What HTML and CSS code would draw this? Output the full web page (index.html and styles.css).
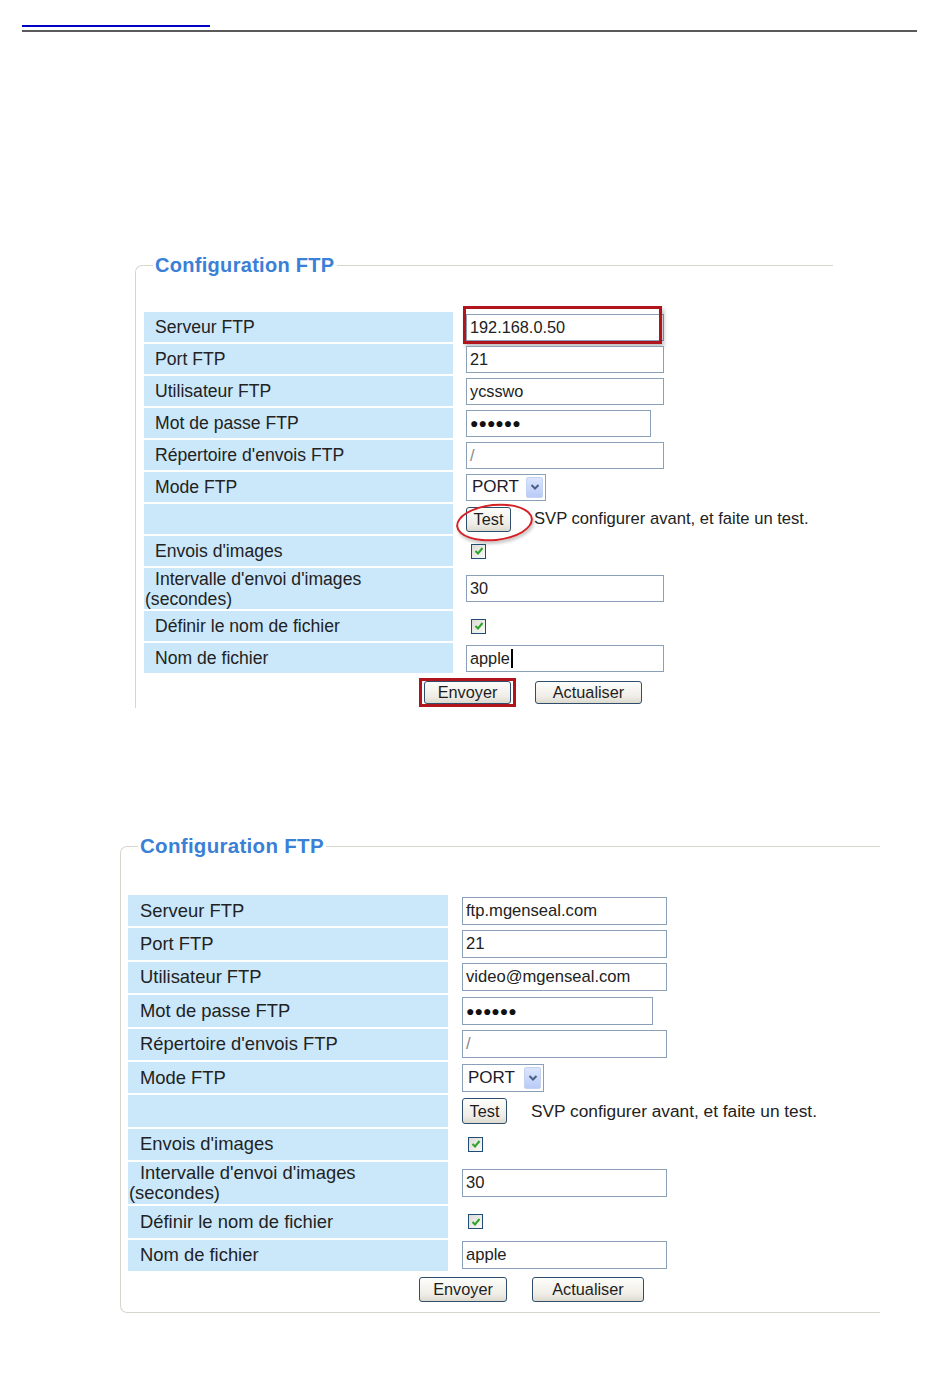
FILE: index.html
```html
<!DOCTYPE html>
<html lang="fr">
<head>
<meta charset="utf-8">
<title>Configuration FTP</title>
<link rel="stylesheet" href="styles.css">
</head>
<body>
<header class="page-head">
  <div class="head-link"></div>
  <div class="head-rule"></div>
</header>

<main class="page">
  <section class="shot shot-1">
    <fieldset class="panel">
      <legend class="panel-title">Configuration FTP</legend>
      <div class="form-grid">
        <div class="lbl">Serveur FTP</div>
        <div class="val">
          <span class="field">192.168.0.50</span>
          <span class="mark-rect mark-server"></span>
        </div>
        <div class="lbl">Port FTP</div>
        <div class="val"><span class="field">21</span></div>
        <div class="lbl">Utilisateur FTP</div>
        <div class="val"><span class="field">ycsswo</span></div>
        <div class="lbl">Mot de passe FTP</div>
        <div class="val"><span class="field field-pass">●●●●●●</span></div>
        <div class="lbl">Répertoire d'envois FTP</div>
        <div class="val"><span class="field field-dim">/</span></div>
        <div class="lbl">Mode FTP</div>
        <div class="val">
          <span class="select">PORT<span class="select-arrow"><svg viewBox="0 0 10 8" width="10" height="8"><path d="M1.5 2 L5 5.5 L8.5 2" fill="none" stroke="#4a5f86" stroke-width="2"/></svg></span></span>
        </div>
        <div class="lbl"></div>
        <div class="val">
          <span class="btn btn-test">Test</span>
          <span class="hint">SVP configurer avant, et faite un test.</span>
          <span class="mark-ellipse"></span>
        </div>
        <div class="lbl">Envois d'images</div>
        <div class="val"><span class="check"><svg viewBox="0 0 10 10" width="10" height="10"><path d="M1.5 5 L4 7.5 L8.5 2" fill="none" stroke="#2ea42e" stroke-width="2"/></svg></span></div>
        <div class="lbl lbl-tall">Intervalle d'envoi d'images (secondes)</div>
        <div class="val"><span class="field">30</span></div>
        <div class="lbl">Définir le nom de fichier</div>
        <div class="val"><span class="check"><svg viewBox="0 0 10 10" width="10" height="10"><path d="M1.5 5 L4 7.5 L8.5 2" fill="none" stroke="#2ea42e" stroke-width="2"/></svg></span></div>
        <div class="lbl">Nom de fichier</div>
        <div class="val"><span class="field">apple<span class="caret"></span></span></div>
      </div>
      <div class="actions">
        <span class="btn-wrap"><span class="btn btn-send">Envoyer</span><span class="mark-rect mark-send"></span></span>
        <span class="btn btn-refresh">Actualiser</span>
      </div>
    </fieldset>
  </section>

  <section class="shot shot-2">
    <fieldset class="panel panel-closed">
      <legend class="panel-title">Configuration FTP</legend>
      <div class="form-grid">
        <div class="lbl">Serveur FTP</div>
        <div class="val"><span class="field">ftp.mgenseal.com</span></div>
        <div class="lbl">Port FTP</div>
        <div class="val"><span class="field">21</span></div>
        <div class="lbl">Utilisateur FTP</div>
        <div class="val"><span class="field">video@mgenseal.com</span></div>
        <div class="lbl">Mot de passe FTP</div>
        <div class="val"><span class="field field-pass">●●●●●●</span></div>
        <div class="lbl">Répertoire d'envois FTP</div>
        <div class="val"><span class="field field-dim">/</span></div>
        <div class="lbl">Mode FTP</div>
        <div class="val">
          <span class="select">PORT<span class="select-arrow"><svg viewBox="0 0 10 8" width="10" height="8"><path d="M1.5 2 L5 5.5 L8.5 2" fill="none" stroke="#4a5f86" stroke-width="2"/></svg></span></span>
        </div>
        <div class="lbl"></div>
        <div class="val">
          <span class="btn btn-test">Test</span>
          <span class="hint">SVP configurer avant, et faite un test.</span>
        </div>
        <div class="lbl">Envois d'images</div>
        <div class="val"><span class="check"><svg viewBox="0 0 10 10" width="10" height="10"><path d="M1.5 5 L4 7.5 L8.5 2" fill="none" stroke="#2ea42e" stroke-width="2"/></svg></span></div>
        <div class="lbl lbl-tall">Intervalle d'envoi d'images (secondes)</div>
        <div class="val"><span class="field">30</span></div>
        <div class="lbl">Définir le nom de fichier</div>
        <div class="val"><span class="check"><svg viewBox="0 0 10 10" width="10" height="10"><path d="M1.5 5 L4 7.5 L8.5 2" fill="none" stroke="#2ea42e" stroke-width="2"/></svg></span></div>
        <div class="lbl">Nom de fichier</div>
        <div class="val"><span class="field">apple</span></div>
      </div>
      <div class="actions">
        <span class="btn btn-send">Envoyer</span>
        <span class="btn btn-refresh">Actualiser</span>
      </div>
    </fieldset>
  </section>
</main>
</body>
</html>
```

FILE: styles.css
```css
* { box-sizing: border-box; }

html, body {
  margin: 0;
  padding: 0;
  background: #ffffff;
}

body {
  font-family: "Liberation Sans", Arial, sans-serif;
  color: #1c1c1c;
  width: 950px;
  height: 1387px;
  overflow: hidden;
}

/* ---------- page header ---------- */
.page-head {
  padding: 25px 33px 0 22px;
}
.head-link {
  width: 188px;
  height: 2px;
  background: #0000c4;
}
.head-rule {
  margin-top: 3px;
  width: 895px;
  height: 2px;
  background: #5a5a5a;
}

/* ---------- screenshots ---------- */
.shot-1 {
  --left: 135px;
  --width: 698px;
  --pad-left: 8px;
  --pad-top: 35px;
  --pad-bottom: 4px;
  --legend-size: 20px;
  --legend-gap: 9px;
  --label-w: 309px;
  --row-h: 30px;
  --tall-h: 41px;
  --label-size: 17.6px;
  --label-indent: 10px;
  --val-pad: 10px;
  --field-w: 198px;
  --pass-w: 185px;
  --field-h: 27px;
  --field-size: 16.3px;
  --select-w: 80px;
  --test-w: 45px;
  --test-h: 25px;
  --hint-gap: 23px;
  --hint-size: 16.6px;
  --check: 15px;
  --check-off: 5px;
  --actions-top: 8px;
  --actions-left: 280px;
  --actions-gap: 24px;
  --send-w: 87px;
  --refresh-w: 107px;
  --btn-h: 23px;
  margin: 221px 0 0 var(--left);
}

.shot-2 {
  --left: 120px;
  --width: 760px;
  --pad-left: 7px;
  --pad-top: 37px;
  --pad-bottom: 10px;
  --legend-size: 20.5px;
  --legend-gap: 10px;
  --label-w: 320px;
  --row-h: 31.4px;
  --tall-h: 42px;
  --label-size: 18.4px;
  --label-indent: 11px;
  --val-pad: 11px;
  --field-w: 205px;
  --pass-w: 191px;
  --field-h: 28px;
  --field-size: 16.6px;
  --select-w: 82px;
  --test-w: 45px;
  --test-h: 26px;
  --hint-gap: 24px;
  --hint-size: 17.3px;
  --check: 15px;
  --check-off: 6px;
  --actions-top: 6px;
  --actions-left: 291px;
  --actions-gap: 25px;
  --send-w: 88px;
  --refresh-w: 112px;
  --btn-h: 25px;
  margin: 126px 0 0 var(--left);
}

.panel {
  width: var(--width);
  margin: 0;
  padding: var(--pad-top) 0 var(--pad-bottom) var(--pad-left);
  border: 1px solid #d6d6cf;
  border-right: none;
  border-bottom: none;
  border-radius: 7px 0 0 0;
  min-width: 0;
}
.panel-closed {
  border-bottom: 1px solid #d6d6cf;
  border-radius: 7px 0 0 7px;
}

.panel-title {
  margin-left: var(--legend-gap);
  padding: 0 2px;
  font-size: var(--legend-size);
  line-height: 24px;
  font-weight: bold;
  letter-spacing: 0.3px;
  color: #3a80d6;
}

/* ---------- form grid ---------- */
.form-grid {
  display: grid;
  grid-template-columns: var(--label-w) 1fr;
  grid-template-rows: repeat(8, var(--row-h)) var(--tall-h) repeat(2, var(--row-h));
  column-gap: 3px;
  row-gap: 2px;
}

.lbl {
  background: #cbe8fb;
  display: flex;
  align-items: center;
  padding-left: 1px;
  text-indent: var(--label-indent);
  font-size: var(--label-size);
  line-height: 20px;
  color: #222;
}
.lbl-tall {
  padding-right: 70px;
}

.val {
  position: relative;
  display: flex;
  align-items: center;
  padding-left: var(--val-pad);
}

.field {
  position: relative;
  display: flex;
  align-items: center;
  width: var(--field-w);
  height: var(--field-h);
  border: 1px solid #8aa0b8;
  background: #fff;
  padding-left: 3px;
  font-size: var(--field-size);
  color: #222;
  white-space: nowrap;
}
.field-pass {
  width: var(--pass-w);
  font-size: 14px;
  letter-spacing: 0;
  color: #111;
}
.field-dim {
  color: #888;
}
.caret {
  display: inline-block;
  width: 2px;
  height: 19px;
  margin-left: 1px;
  background: #000;
}

.select {
  display: flex;
  align-items: center;
  position: relative;
  width: var(--select-w);
  height: var(--field-h);
  border: 1px solid #8aa0b8;
  background: #fff;
  padding-left: 5px;
  font-size: 17px;
  color: #221a2a;
}
.select-arrow {
  position: absolute;
  top: 2px;
  right: 2px;
  bottom: 2px;
  width: 17px;
  display: flex;
  align-items: center;
  justify-content: center;
  background: linear-gradient(#dbe5fd, #b9cbf6);
  border: 1px solid #c4d3f4;
  border-radius: 2px;
}

.btn {
  display: inline-flex;
  align-items: center;
  justify-content: center;
  border: 1px solid #2f4e6c;
  border-radius: 3px;
  background: linear-gradient(#fdfdfb, #efede6 70%, #dcd9cf);
  font-size: 16.3px;
  color: #1e1e1e;
}
.btn-test {
  width: var(--test-w);
  height: var(--test-h);
}
.hint {
  margin-left: var(--hint-gap);
  font-size: var(--hint-size);
  color: #222;
  white-space: nowrap;
}

.check {
  display: inline-flex;
  align-items: center;
  justify-content: center;
  margin-left: var(--check-off);
  width: var(--check);
  height: var(--check);
  border: 1px solid #1f4d78;
  background: linear-gradient(135deg, #dedbd3, #fafaf8);
}

.actions {
  display: flex;
  gap: var(--actions-gap);
  margin-top: var(--actions-top);
  padding-left: var(--actions-left);
}
.btn-send {
  width: var(--send-w);
  height: var(--btn-h);
}
.btn-refresh {
  width: var(--refresh-w);
  height: var(--btn-h);
}
.btn-wrap {
  position: relative;
  display: inline-flex;
}

/* ---------- red annotations (overlay) ---------- */
.mark-rect {
  position: absolute;
  border: 3px solid #b0141c;
  box-shadow: 2px 3px 4px rgba(0, 0, 0, 0.25);
  pointer-events: none;
}
.mark-server {
  left: 7px;
  top: -6px;
  width: 199px;
  height: 38px;
}
.mark-send {
  left: -5px;
  top: -3px;
  width: 97px;
  height: 29px;
  box-shadow: none;
}
.mark-ellipse {
  position: absolute;
  left: 0;
  top: 0;
  width: 77px;
  height: 37px;
  border: 2px solid #d42127;
  border-radius: 50%;
  transform: rotate(-6deg);
  box-shadow: 1px 3px 3px rgba(0, 0, 0, 0.2);
}
```
